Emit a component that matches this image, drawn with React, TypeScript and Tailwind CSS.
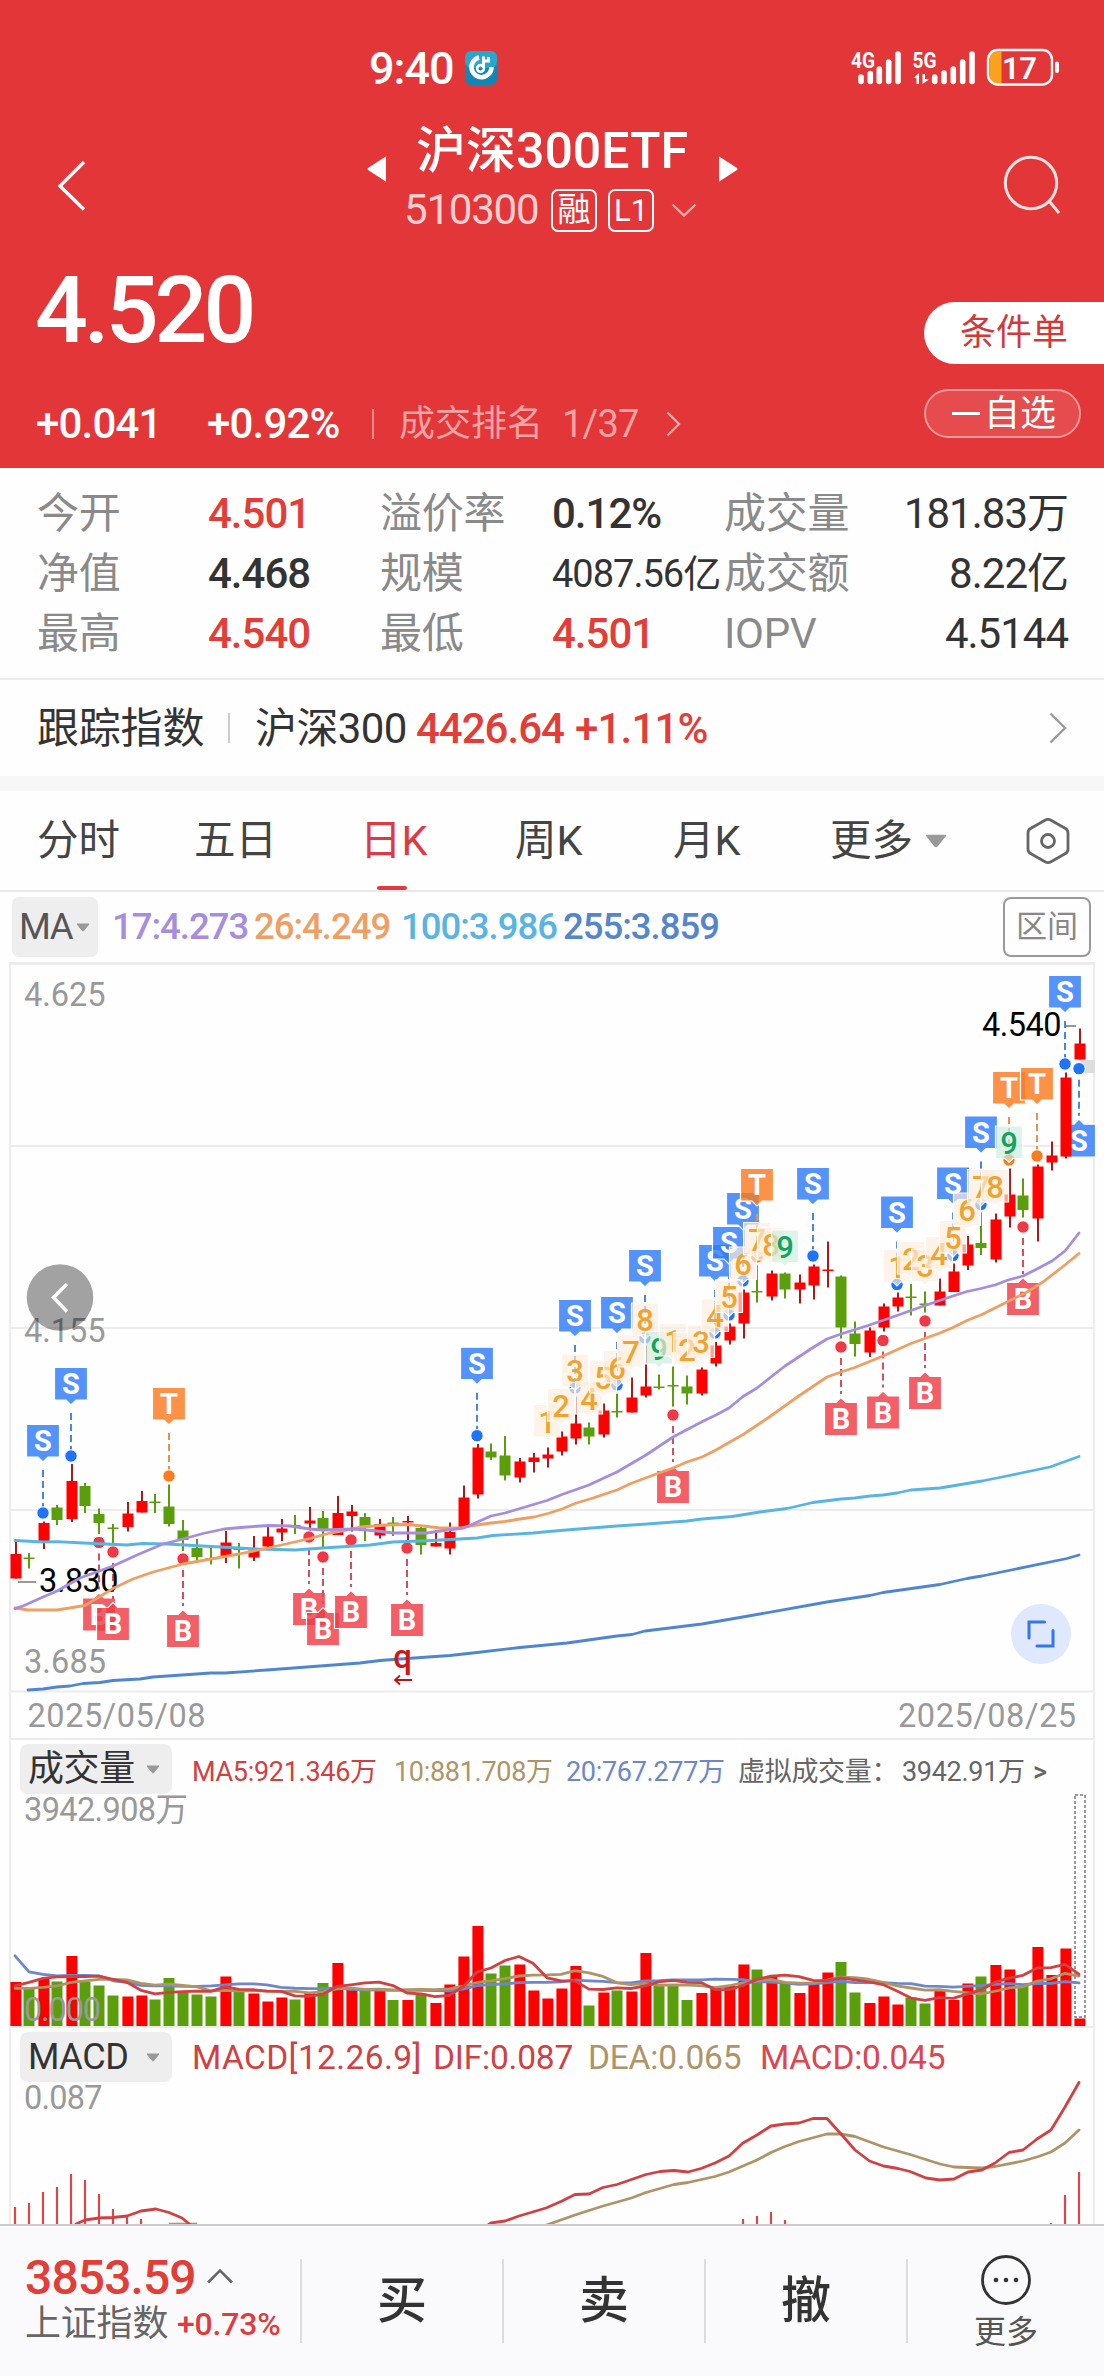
import type { ReactNode } from "react";
import clsx from "clsx";

const STEP = 14;
const FIRST_X = 15;
const slotX = (i: number) => FIRST_X + i * STEP;

/* ---------- dados ---------- */

// r = alta, g = queda; y em px: [máxima, topo do corpo, base do corpo, mínima]
type Candle = ["r" | "g", number, number, number, number];

const candles: Candle[] = [
  ["r", 1542, 1554, 1578.5, 1578.5], ["g", 1553, 1557.5, 1558.5, 1568.5], ["r", 1521.5, 1523, 1541, 1549],
  ["g", 1505, 1507.5, 1520, 1525], ["r", 1464, 1481, 1519, 1522], ["g", 1483, 1486, 1506, 1513],
  ["g", 1508.5, 1514, 1523, 1534], ["g", 1524, 1527.5, 1528.5, 1543], ["r", 1502, 1513.5, 1527, 1531.5],
  ["r", 1491, 1501, 1512.5, 1512.5], ["g", 1494, 1501.5, 1502.5, 1513], ["g", 1484.5, 1506.5, 1524, 1526.5],
  ["g", 1520, 1530.5, 1540, 1551], ["g", 1539, 1548, 1557, 1563], ["g", 1548, 1558, 1559, 1564.5],
  ["r", 1531, 1542.5, 1556.5, 1563], ["g", 1543, 1548.5, 1549.5, 1568.5], ["r", 1536, 1550.5, 1557.5, 1561],
  ["r", 1526.5, 1536.5, 1546.5, 1549], ["r", 1519, 1528.5, 1532.5, 1541], ["g", 1515, 1525, 1526, 1534],
  ["r", 1507, 1520.5, 1523.5, 1534], ["g", 1511, 1518, 1530, 1547], ["r", 1496, 1513, 1535, 1535],
  ["r", 1505, 1511.5, 1516, 1531.5], ["g", 1513, 1517, 1527.5, 1541], ["r", 1519, 1524, 1535.5, 1538.5],
  ["g", 1517, 1522.5, 1523.5, 1536], ["r", 1516, 1521, 1522, 1541.5], ["g", 1526.5, 1528, 1545, 1554.5],
  ["r", 1530, 1543, 1546.5, 1546.5], ["r", 1522.5, 1532, 1548.5, 1554.5], ["r", 1485.5, 1497.5, 1527.5, 1527.5],
  ["r", 1444, 1447.5, 1494.5, 1498.5], ["g", 1443.5, 1451.5, 1457.5, 1460], ["g", 1436, 1455.5, 1475.5, 1480.5],
  ["r", 1458, 1461.5, 1477.5, 1482.5], ["r", 1453, 1457.5, 1462, 1472.5], ["r", 1447.5, 1454.5, 1458.5, 1467.5],
  ["r", 1431.5, 1436.5, 1451.5, 1455.5], ["r", 1396.5, 1423.5, 1438.5, 1444.5], ["g", 1422.5, 1427.5, 1436.5, 1444.5],
  ["r", 1403.5, 1410.5, 1434.5, 1437.5], ["g", 1393.5, 1411, 1412, 1417.5], ["r", 1377.5, 1397.5, 1412.5, 1412.5],
  ["r", 1345.5, 1386.5, 1395.5, 1397.5], ["g", 1374.5, 1386.5, 1387.5, 1389.5], ["g", 1366.5, 1385, 1386, 1406.5],
  ["g", 1375.5, 1386.5, 1393.5, 1404.5], ["r", 1367.5, 1369.5, 1393.5, 1395.5], ["r", 1342, 1345.5, 1363.5, 1366.5],
  ["r", 1323.5, 1326.5, 1340.5, 1344.5], ["r", 1289.5, 1292.5, 1323.5, 1338.5], ["g", 1265.5, 1291, 1292, 1302.5],
  ["r", 1270.5, 1273.5, 1296.5, 1300.5], ["g", 1272.5, 1273.5, 1289.5, 1298.5], ["r", 1274.5, 1282.5, 1289.5, 1303.5],
  ["r", 1264.5, 1266.5, 1285.5, 1299.5], ["r", 1241.5, 1269.5, 1270.5, 1287.5], ["g", 1275.5, 1276.5, 1327.5, 1338.5],
  ["g", 1321.5, 1333.5, 1344, 1356.5], ["r", 1327.5, 1330.5, 1352.5, 1357], ["r", 1303.5, 1306.5, 1327.5, 1331.5],
  ["r", 1292.5, 1297.5, 1306.5, 1311.5], ["g", 1284, 1296.5, 1297.5, 1315.5], ["g", 1291.5, 1303.5, 1304.5, 1312.5],
  ["r", 1278.5, 1291.5, 1305.5, 1305.5], ["r", 1263.5, 1271.5, 1292, 1292], ["r", 1236, 1244.5, 1265.5, 1270],
  ["g", 1212.5, 1243, 1248, 1255], ["r", 1213.5, 1219.5, 1259.5, 1262.5], ["r", 1168.5, 1194.5, 1216.5, 1227.5],
  ["g", 1178.5, 1195.5, 1210, 1217.5], ["r", 1164.5, 1166.5, 1218.5, 1241.5], ["r", 1141.5, 1155.5, 1162.5, 1170.5],
  ["r", 1072.5, 1077.5, 1156.5, 1158.5], ["r", 1028.5, 1043.5, 1059.5, 1059.5],
];

const MA17 =
  "15,1608.7 23,1606 43,1597 57,1591 80,1578 113,1566 137,1555 163,1544 183,1539 203,1533.5 224,1529 247,1527 268,1525.5 290,1526 310,1529 323,1530 338,1529.5 353,1529 367,1530 377,1531 393,1533 427,1533 440,1531 464,1528 491,1516 505,1513 547,1500.5 562,1494.5 589,1485 605,1477.5 617,1472 646,1455 673,1437 702,1421.7 716,1415 729,1408 743,1396.5 757,1388 785,1366 813,1347.5 827,1339 841,1334 868,1325.5 897,1315.5 925,1305.5 953,1296 967,1291.5 981,1288.5 995,1285 1008,1280 1023,1276 1037,1269 1052,1261 1065,1251 1079,1233";
const MA26 =
  "15,1608 28,1610 57,1610 85,1605.5 100,1596.5 113,1588.5 133,1579 153,1572 183,1564 211,1559 239,1554 268,1548 297,1541.5 310,1538.5 330,1533 347,1530 360,1527 387,1525 407,1524.5 423,1526 440,1528 460,1528 470,1526 491,1523 505,1521.5 520,1519 534,1517 548,1513.5 562,1509 575,1503.5 593,1498 617,1490 632,1483 659,1473 673,1468 687,1462 702,1457 716,1450 730,1442 744,1434 770,1416.5 798,1396.5 827,1377 841,1372 855,1367.5 883,1356 911,1343.5 940,1333 953,1327.5 967,1320.5 982,1314.5 1007,1302 1027,1292 1043,1282 1063,1266.5 1079,1253.5";
const MA100 =
  "15,1540.5 43,1542 57,1541.7 83,1543 127,1545 143,1543.5 167,1544 211,1546.5 239,1548 258,1549 295,1550 323,1548 347,1546.5 370,1545 393,1542 433,1540.5 477,1538 493,1535.5 533,1533 560,1530.5 617,1526 647,1524 687,1521 702,1519 732,1516.5 760,1512 787,1508.5 813,1502.5 841,1499 855,1498 870,1496 883,1495 897,1493 911,1490 940,1488 982,1481 1007,1476 1050,1467 1079,1456.5";
const MA255 =
  "28,1690 43,1689 57,1687 70,1686 83,1683.5 100,1682.5 113,1680.5 140,1679 153,1677 211,1673 225,1673 267,1670 300,1667.5 360,1663 380,1660.5 393,1659.5 450,1655.5 477,1652.5 520,1647.5 567,1643 617,1636 632,1634.5 645,1631 702,1624 740,1617.5 827,1602 870,1595.5 883,1592.5 940,1584.5 967,1578.5 982,1576 1067,1558.5 1079,1555";

type FlagKind = "S" | "T" | "B";
// [tipo, posição, y do ponto]
const flags: [FlagKind, number, number][] = [
  ["S", 2, 1513], ["S", 4, 1456], ["B", 6, 1542.5], ["B", 7, 1552], ["T", 11, 1476], ["B", 12, 1559],
  ["B", 21, 1537], ["B", 22, 1557], ["B", 24, 1540], ["B", 28, 1548], ["S", 33, 1435.7], ["S", 40, 1388],
  ["S", 43, 1385], ["S", 45, 1338], ["B", 47, 1415], ["S", 50, 1333], ["S", 51, 1315], ["S", 52, 1281],
  ["T", 53, 1257], ["S", 57, 1256], ["B", 59, 1347], ["B", 62, 1340.5], ["S", 63, 1284.5], ["B", 65, 1321],
  ["S", 67, 1255.5], ["S", 69, 1204.5], ["T", 71, 1160], ["B", 72, 1227], ["T", 73, 1156], ["S", 75, 1064],
];

// contagem sequencial: [posição, número, y do topo]
const counts: [number, number, number][] = [
  [38, 1, 1404.5], [39, 2, 1388.5], [40, 3, 1354], [41, 4, 1381.5], [42, 5, 1360.5], [43, 6, 1350.5],
  [44, 7, 1334.5], [45, 8, 1303], [46, 9, 1331.5], [47, 1, 1323.5], [48, 2, 1332.5], [49, 3, 1325],
  [50, 4, 1299], [51, 5, 1280], [52, 6, 1247], [53, 7, 1222.5], [54, 8, 1227.5], [55, 9, 1230],
  [63, 1, 1249.5], [64, 2, 1241.5], [65, 3, 1249], [66, 4, 1236.5], [67, 5, 1220.5], [68, 6, 1193],
  [69, 7, 1169.5], [70, 8, 1169.5], [71, 9, 1126],
];

// altura em px de cada barra de volume
const volumes = [
  44, 38.5, 47, 44.5, 70, 44, 40.5, 30.5, 29.5, 30.5, 26.5, 48, 34, 31.5, 29.5, 49.5, 35, 32.5, 24.5, 28.5, 26.5, 33,
  43, 63, 37, 36.5, 36, 26, 26, 32.5, 23, 41.5, 69.5, 100, 52.5, 60.5, 61.5, 35.5, 27.5, 37.5, 60, 20.5, 33.5, 35.5,
  34.5, 73, 41, 40.5, 26, 33, 38.5, 40, 61.5, 56.5, 49, 43.5, 33, 43, 53.5, 64, 33.5, 23, 29.5, 21.5, 28.5, 22.5,
  36.5, 26, 42.5, 49.5, 61, 56.5, 40.5, 79, 51, 77.5, 7.5,
];

const DIF_LEFT = "76,2224 85,2220 99,2218 113,2217.5 127,2216 141,2211 156,2209 169,2212.5 182,2218 193,2227";
const DIF =
  "485,2227 491,2223 505,2221 519,2216 546,2208 561,2201.5 575,2194.5 589,2194 603,2187.5 617,2184.5 646,2174.5 660,2171.5 674,2170.5 688,2172 701,2168.5 715,2163 729,2156 743,2143 757,2135 771,2126 785,2124 799,2123 813,2118.5 827,2118.5 841,2134 855,2150 869.5,2161 883.5,2166 898,2168.5 910,2171.5 926,2178 940,2180 954,2179 968,2172 982,2170 995,2163 1009,2152.5 1023,2150 1037,2139 1051,2130 1065,2107 1079,2082.5";
const DEA =
  "541,2227 575,2215 603,2206 631.5,2198 646,2192.5 674,2184.5 688,2182.5 715,2176.5 729,2172 757,2160 771,2152.5 785,2146.5 799,2141.5 827,2134 841,2134 855,2136.5 883.5,2147 910,2154.5 940,2164 954,2167 982,2168 995,2166.5 1023,2161 1038.5,2156.5 1051,2152 1065,2143 1079,2130";
const macdBars: [number, number][] = [
  [0, 2207], [1, 2203], [2, 2192], [3, 2187], [4, 2174], [5, 2180], [6, 2194], [7, 2209], [8, 2217], [9, 2219],
  [52, 2219], [53, 2216], [54, 2212], [55, 2220], [74, 2223], [75, 2195], [76, 2172],
];

const UP = "#ff0000";
const DOWN = "#5a9e0c";
const GRID = "#ececec";

/* ---------- médias de volume ---------- */

function averageLine(period: number, lead: number[]) {
  return volumes
    .map((_, i) => {
      const h =
        i < lead.length
          ? lead[i]
          : volumes.slice(i - period + 1, i + 1).reduce((a, b) => a + b, 0) / period;
      return `${slotX(i)},${2025.3 - h}`;
    })
    .join(" ");
}

const VOL_MA5 = averageLine(5, [39.5, 43, 47, 48.5]);
const VOL_MA10 = averageLine(10, [37, 37, 38, 39.5, 43, 44.5, 46, 46, 45.5]);
const VOL_MA20 = averageLine(
  20,
  [69.5, 53.5, 51, 49.5, 50, 50, 49.5, 44.5, 43, 40, 39.5, 39.5, 39, 39, 39.5, 40.5, 41.5, 41.5, 40.5],
);

/* ---------- peças do gráfico ---------- */

function SvgText({
  x,
  y,
  size,
  length,
  fill = "#999",
  children,
}: {
  x: number;
  y: number;
  size: number;
  length: number;
  fill?: string;
  children: string;
}) {
  return (
    <text x={x} y={y} fontSize={size} textLength={length} fill={fill}>
      {children}
    </text>
  );
}

function Line({ points, color, width = 2.8 }: { points: string; color: string; width?: number }) {
  return (
    <polyline
      points={points}
      fill="none"
      stroke={color}
      strokeWidth={width}
      strokeLinejoin="round"
      strokeLinecap="round"
    />
  );
}

const flagColors = {
  S: { box: "#2f7bfb", dot: "#1f74f5", dash: "#4a86dd" },
  T: { box: "#fb7a1e", dot: "#f97d20", dash: "#e8904c" },
  B: { box: "#f03b46", dot: "#ee3a47", dash: "#d2505e" },
};

function Flag({ kind, x, dot, below }: { kind: FlagKind; x: number; dot: number; below: boolean }) {
  const c = flagColors[kind];
  const top = below ? dot + 55.5 : dot - 88.5;
  const shape = below
    ? `M${x - 16.5} ${top}h11.5l5-5l5 5h11.5v33h-33z`
    : `M${x - 16.5} ${top}h33v32.5h-11.5l-5 5l-5-5h-11.5z`;
  return (
    <g>
      <line
        x1={x}
        x2={x}
        y1={below ? dot + 11 : dot - 43}
        y2={below ? dot + 47 : dot - 6}
        stroke={c.dash}
        strokeWidth={2}
        strokeDasharray="7 4"
      />
      <circle cx={x} cy={dot} r={6.2} fill={c.dot} stroke="#fff" strokeWidth={1} />
      <path d={shape} fill={c.box} fillOpacity={0.82} stroke="#fff" strokeWidth={1.2} />
      <text x={x} y={top + 26.5} fontSize={29} fontWeight={700} fill="#fff" textAnchor="middle">
        {kind}
      </text>
    </g>
  );
}

function CountTag({ x, n, top }: { x: number; n: number; top: number }) {
  const nine = n === 9;
  return (
    <g>
      <path
        d={`M${x - 13.5} ${top}h27v32.5h-9.5l-4 4l-4-4h-9.5z`}
        fill={nine ? "#cdeedd" : "#fdeedd"}
        fillOpacity={0.68}
        stroke="#fff"
        strokeWidth={1.2}
      />
      <text
        x={x}
        y={top + 28}
        fontSize={31}
        fontWeight={500}
        fill={nine ? "#13a35f" : "#f0a32f"}
        textAnchor="middle"
      >
        {n}
      </text>
    </g>
  );
}

function PriceChart() {
  return (
    <svg viewBox="0 962 1104 782" className="block h-[782px] w-full">
      <defs>
        <clipPath id="plot">
          <rect x="9" y="962" width="1086" height="777" />
        </clipPath>
      </defs>
      <g stroke={GRID} strokeWidth={2} fill="none">
        <path d="M9 963.5H1095" strokeWidth={3} />
        <path d="M9 1146H1095M9 1328H1095M9 1510H1095M9 1691.5H1095M9 1739H1095M10 962V1744M1094 962V1744" />
      </g>
      <rect x="1080" y="1060" width="15" height="13" fill="#ddd" />

      {/* a venda do dia fica atrás do candle anterior */}
      <g clipPath="url(#plot)">
        <Flag kind="S" x={slotX(76)} dot={1068.7} below />
      </g>

      {candles.map(([dir, high, top, bottom, low], i) => {
        const up = dir === "r";
        const cx = slotX(i) + (up ? 1 : 0);
        return (
          <g key={i}>
            <line x1={cx} x2={cx} y1={high} y2={low} stroke={up ? "#a61c1c" : DOWN} strokeWidth={2} />
            <rect x={cx - 5.5} y={top} width={11} height={Math.max(bottom - top, 1.5)} fill={up ? UP : DOWN} />
          </g>
        );
      })}

      {flags.map(([kind, i, dot]) => (
        <Flag key={`${kind}${i}`} kind={kind} x={slotX(i)} dot={dot} below={kind === "B"} />
      ))}
      {counts.map(([i, n, top]) => (
        <CountTag key={i} x={slotX(i)} n={n} top={top} />
      ))}

      <SvgText x={24} y={1006} size={32.5} length={81.5}>4.625</SvgText>
      <SvgText x={24} y={1341.5} size={32.5} length={81.5}>4.155</SvgText>
      <SvgText x={24} y={1672.5} size={32.5} length={82}>3.685</SvgText>
      <SvgText x={39} y={1591.5} size={32.5} length={79.5} fill="#000">3.830</SvgText>
      <SvgText x={982} y={1035.5} size={32.5} length={79.5} fill="#000">4.540</SvgText>
      <path d="M18 1582H36M1065 1026H1076" stroke="#777" strokeWidth={1.6} />

      <Line points={MA255} color="#4f86cf" />
      <Line points={MA100} color="#58b4e2" />
      <Line points={MA26} color="#eea064" />
      <Line points={MA17} color="#a58ddf" />

      {/* ex-direitos */}
      <text x={402.5} y={1668} fontSize={33} fontWeight={500} fill="#cc1717" textAnchor="middle">q</text>
      <path d="M412 1680H395M400 1675.5L395 1680L400 1684.5" fill="none" stroke="#b51616" strokeWidth={1.8} />

      <circle cx="60" cy="1297.5" r="33.3" fill="#000" fillOpacity="0.36" />
      <path d="M67 1284L53.5 1297.5L67 1311.5" fill="none" stroke="#fff" strokeWidth={3.6} />
      <circle cx="1041" cy="1634" r="30" fill="#dfe8fd" />
      <path
        d="M1044.5 1622H1029V1638M1037 1646H1053V1630.5"
        fill="none"
        stroke="#3478e8"
        strokeWidth={3}
        strokeLinecap="round"
      />

      <SvgText x={27.5} y={1727} size={32.5} length={178}>2025/05/08</SvgText>
      <SvgText x={898} y={1727} size={32.5} length={178}>2025/08/25</SvgText>
    </svg>
  );
}

function VolumeChart() {
  return (
    <svg viewBox="0 1794 1104 238" className="block h-[238px] w-full overflow-visible">
      <path d="M10 1794V2032M1094 1794V2032M9 2027H1095" stroke={GRID} strokeWidth={2} />
      <SvgText x={24} y={1821} size={32.5} length={164}>3942.908万</SvgText>
      {volumes.map((h, i) => (
        <rect
          key={i}
          x={slotX(i) - (candles[i][0] === "r" ? 4.6 : 5.5)}
          y={2026 - h}
          width={11}
          height={h}
          fill={candles[i][0] === "r" ? UP : DOWN}
        />
      ))}
      <rect
        x="1075"
        y="1795"
        width="10"
        height="222"
        fill="none"
        stroke="#777"
        strokeWidth={1.5}
        strokeDasharray="3 2"
      />
      <Line points={VOL_MA20} color="#6d86cc" />
      <Line points={VOL_MA10} color="#ae9466" />
      <Line points={VOL_MA5} color="#cf4142" />
      <SvgText x={24} y={2020.5} size={32.5} length={77}>0.000</SvgText>
    </svg>
  );
}

function MacdChart() {
  return (
    <svg viewBox="0 2080 1104 144" className="-mt-1 block h-36 w-full">
      <path d="M10 2080V2224M1094 2080V2224" stroke={GRID} strokeWidth={2} />
      <SvgText x={24} y={2109} size={32.5} length={78.5}>0.087</SvgText>
      {macdBars.map(([i, y]) => (
        <line key={i} x1={slotX(i)} x2={slotX(i)} y1={y} y2={2226} stroke="#d9474a" strokeWidth={2.2} />
      ))}
      <path d="M169 2223.7H197" stroke="#ae9466" strokeWidth={2} />
      <Line points={DEA} color="#ae9466" />
      <Line points={DIF_LEFT} color="#cf4142" />
      <Line points={DIF} color="#cf4142" />
    </svg>
  );
}

/* ---------- blocos da página ---------- */

function Caret({ className }: { className?: string }) {
  return (
    <svg viewBox="0 0 14 9" className={clsx("shrink-0", className)}>
      <path d="M1 1H13L7.8 7.6Q7 8.4 6.2 7.6Z" fill="#999" stroke="#999" strokeLinejoin="round" />
    </svg>
  );
}

function Txt({ className, children }: { className: string; children: ReactNode }) {
  return <span className={clsx("block shrink-0 whitespace-nowrap", className)}>{children}</span>;
}

function StatusBar() {
  return (
    <div className="flex h-[100px] items-start pt-10">
      <Txt className="mt-[5px] ml-[369px] w-[96px] text-[45px] leading-[48px] font-medium tracking-[-1px]">9:40</Txt>
      <svg viewBox="0 0 32 34" className="mt-[11px] h-[34px] w-8">
        <rect width="32" height="34" rx="6" fill="#1286b4" />
        <rect width="32" height="17" rx="6" fill="#2aa6cc" />
        <path d="M14 6.5A10 10 0 1 0 26.5 16" fill="none" stroke="#fff" strokeWidth="4.6" />
        <circle cx="15.5" cy="17.5" r="3.4" fill="none" stroke="#fff" strokeWidth="2.6" />
        <path d="M18.5 15.5V5.5M18.5 10H23.5V6" fill="none" stroke="#fff" strokeWidth="3" />
      </svg>
      <svg viewBox="850 40 214 60" className="ml-[353px] h-[60px] w-[214px]">
        <g stroke="#fff" strokeWidth="5.6" strokeLinecap="round">
          <path d="M861 77V81.5M870.3 73.5V81.5M879.3 69V81.5M888.7 62V81.5M898 54V81.5" />
          <path d="M934.7 77V81.5M944 73V81.5M953.3 69V81.5M962.7 62V81.5M972 54V81.5" />
        </g>
        <g fill="#fff" fontWeight={700} fontSize={22}>
          <text x="851" y="67.5" textLength="24" lengthAdjust="spacingAndGlyphs">4G</text>
          <text x="912.5" y="67.5" textLength="24" lengthAdjust="spacingAndGlyphs">5G</text>
        </g>
        <path d="M914 77.5L919 73V84H916.5V78.5ZM922.5 74H925V79L929 79.5L922.5 84Z" fill="#fff" />
        <path d="M1001.5 51.5H996Q989.5 52 989.5 59V75Q989.5 82.5 996 83H1001.5Z" fill="#fca11d" />
        <rect x="988" y="50" width="64" height="34.5" rx="9.5" fill="none" stroke="#fff" strokeWidth="2.4" />
        <path d="M1057 63.5V71" stroke="#fff" strokeWidth="4" strokeLinecap="round" />
        <text x="1002" y="78.5" fontSize={31} fontWeight={600} fill="#fff" textLength="35">17</text>
      </svg>
    </div>
  );
}

function Header() {
  return (
    <header className="h-[468px] bg-[#e33638] text-white">
      <StatusBar />
      <div className="flex h-[154px]">
        <svg viewBox="0 0 30 52" className="mt-[60px] ml-[57px] h-[52px] w-[30px]">
          <path d="M27 2L3 26L27 49.5" fill="none" stroke="#fff" strokeWidth="3.4" />
        </svg>
        <svg viewBox="0 0 20 28" className="mt-[55px] ml-[280px] h-7 w-5">
          <path d="M19 2V26Q19 27 18 26L1 15Q0 14 1 13L18 2Q19 1 19 2Z" fill="#fff" />
        </svg>
        <div className="w-[330px] pt-[23px]">
          <Txt className="text-center text-[50px] leading-[56px] font-medium">沪深300ETF</Txt>
          <div className="mt-[9px] flex items-center">
            <Txt className="ml-[17px] w-[147px] text-[42px] leading-[44px] tracking-[-1.2px] text-[#fbcfcf]">510300</Txt>
            <Txt className="h-[43px] w-[46px] rounded-[7px] border-2 text-center text-[33px] leading-[38px]">融</Txt>
            <Txt className="ml-[11px] h-[43px] w-[46px] rounded-[7px] border-2 text-center text-[31px] leading-[40px]">
              L1
            </Txt>
            <svg viewBox="0 0 26 14" className="ml-[17px] h-3.5 w-[26px]">
              <path d="M1.5 1.5L13 12.5L24.5 1.5" fill="none" stroke="#f5a9a9" strokeWidth="2.4" />
            </svg>
          </div>
        </div>
        <svg viewBox="0 0 20 28" className="mt-[55px] ml-px h-7 w-5">
          <path d="M1 2V26Q1 27 2 26L19 15Q20 14 19 13L2 2Q1 1 1 2Z" fill="#fff" />
        </svg>
        <svg viewBox="0 0 62 62" className="mt-[54px] ml-[263px] size-[62px]">
          <circle cx="30" cy="29" r="25.7" fill="none" stroke="#fde2e2" strokeWidth="3" />
          <path d="M48.5 47.5L58 59" stroke="#fde2e2" strokeWidth="3" />
        </svg>
      </div>
      <div className="flex h-[214px] justify-between">
        <div>
          <Txt className="mt-[13px] ml-[35px] text-[93px] leading-[88px] font-medium tracking-[-4px]">4.520</Txt>
          <div className="mt-12 flex h-[42px] items-center text-[42px] leading-[42px]">
            <Txt className="ml-9 w-[171px] font-medium tracking-[-0.8px]">+0.041</Txt>
            <Txt className="w-[165px] font-medium tracking-[-0.8px]">+0.92%</Txt>
            <div className="h-[30px] w-0.5 bg-[#f08a8b]" />
            <Txt className="ml-[25px] w-[163px] text-[36px] text-[#f5a3a4]">成交排名</Txt>
            <Txt className="w-[104px] text-[38px] tracking-[-0.8px] text-[#f5a3a4]">1/37</Txt>
            <svg viewBox="0 0 15 26" className="h-[26px] w-[15px]">
              <path d="M1.5 1.5L13 13L1.5 24.5" fill="none" stroke="#f5a9a9" strokeWidth="2.4" />
            </svg>
          </div>
        </div>
        <div className="w-[180px] pt-12">
          <Txt className="h-[62px] rounded-l-[31px] bg-white pl-[36px] text-[36px] leading-[62px] text-[#d03a38]">
            条件单
          </Txt>
          <div className="mt-[25px] flex h-[49px] w-[157px] items-center rounded-full border-2 border-[#f19a9b] bg-[#e64b4d]">
            <div className="ml-[26px] h-[3px] w-[28px] bg-white" />
            <Txt className="ml-1 text-[36px] leading-[46px]">自选</Txt>
          </div>
        </div>
      </div>
    </header>
  );
}

const quotes = [
  ["今开", "4.501", true, "溢价率", "0.12%", false, "成交量", "181.83万"],
  ["净值", "4.468", false, "规模", "4087.56亿", false, "成交额", "8.22亿"],
  ["最高", "4.540", true, "最低", "4.501", true, "IOPV", "4.5144"],
] as const;

function Quotes() {
  return (
    <section className="h-[212px] border-b-2 border-[#ececec] pt-4 text-[42px] leading-[60px] font-medium tracking-[-1px] text-[#333]">
      {quotes.map(([l1, v1, up1, l2, v2, up2, l3, v3]) => (
        <div key={l1} className="flex h-[60px] pr-9 pl-[37px]">
          <Txt className="w-[171px] font-normal tracking-[-0.3px] text-[#8a8a8a]">{l1}</Txt>
          <Txt className={clsx("w-[172px]", up1 && "text-[#e33d38]")}>{v1}</Txt>
          <Txt className="w-[172px] font-normal tracking-[-0.3px] text-[#8a8a8a]">{l2}</Txt>
          <Txt className={clsx("w-[172px]", up2 && "text-[#e33d38]", v2.length > 7 && "text-[38px] font-normal")}>
            {v2}
          </Txt>
          <Txt className="font-normal tracking-[-0.3px] text-[#8a8a8a]">{l3}</Txt>
          <Txt className="ml-auto font-normal">{v3}</Txt>
        </div>
      ))}
    </section>
  );
}

function TrackedIndex() {
  return (
    <section className="flex h-24 items-center pl-[37px] text-[42px] leading-[60px] font-medium tracking-[-1px] text-[#333]">
      <Txt className="w-[191px] pt-0.5 font-normal tracking-[-0.2px]">跟踪指数</Txt>
      <div className="h-[30px] w-0.5 bg-[#ccc]" />
      <Txt className="ml-[25px] w-[161px] pt-0.5 font-normal tracking-[-0.6px]">沪深300</Txt>
      <Txt className="w-[159px] pt-0.5 text-[#e33d38]">4426.64</Txt>
      <Txt className="w-[474px] pt-0.5 tracking-[-0.8px] text-[#e33d38]">+1.11%</Txt>
      <svg viewBox="0 0 18 32" className="h-8 w-[18px]">
        <path d="M1.5 1.5L16 16L1.5 30.5" fill="none" stroke="#999" strokeWidth="2.4" />
      </svg>
    </section>
  );
}

const tabs = [
  { label: "分时", width: "w-[157px]" },
  { label: "五日", width: "w-[166px]" },
  { label: "日K", width: "w-[155px]" },
  { label: "周K", width: "w-[158px]" },
  { label: "月K", width: "w-[157px]" },
  { label: "更多", width: "w-[95px]" },
];

function Tabs() {
  const active = "日K";
  return (
    <nav className="flex h-[101px] border-b-2 border-[#e8e8e8] pl-[37px] text-[41.5px] leading-[100px] text-[#444]">
      {tabs.map(({ label, width }) => (
        <div key={label} className={clsx("shrink-0", width, label === active && "text-[#dc3b44]")}>
          <div className="h-[95px]">{label}</div>
          {label === active && <div className="ml-[17px] h-1 w-[30px] rounded-sm bg-[#dc3b44]" />}
        </div>
      ))}
      <Caret className="mt-[43px] h-[14px] w-[22px]" />
      <svg viewBox="0 0 46 48" className="mt-[26px] ml-[78px] h-12 w-[46px]">
        <path
          d="M20 3.2Q23 1.5 26 3.2L40.5 11.5Q43 13 43 16V32Q43 35 40.5 36.5L26 44.8Q23 46.5 20 44.8L5.5 36.5Q3 35 3 32V16Q3 13 5.5 11.5Z"
          fill="none"
          stroke="#666"
          strokeWidth="2.8"
        />
        <circle cx="23" cy="24" r="6.5" fill="none" stroke="#666" strokeWidth="2.8" />
      </svg>
    </nav>
  );
}

function MaRow() {
  return (
    <div className="flex h-[70px] items-start pt-[5px] pl-3 text-[36.5px] leading-[60px] font-medium tracking-[-1px]">
      <div className="flex h-[60px] w-[86px] items-center rounded-[7px] bg-[#eee] pl-[7px] text-[#555]">
        <Txt className="w-[57px] font-normal tracking-[-1.5px]">MA</Txt>
        <Caret className="h-[9px] w-[14px]" />
      </div>
      <Txt className="ml-[14px] w-[142px] text-[#a58ddf]">17:4.273</Txt>
      <Txt className="w-[147px] text-[#eea064]">26:4.249</Txt>
      <Txt className="w-[162px] text-[#58b4e2]">100:3.986</Txt>
      <Txt className="w-[440px] text-[#5585cb]">255:3.859</Txt>
      <Txt className="h-[60px] w-[88px] rounded-lg border-2 border-[#999] text-center text-[31px] leading-[56px] font-normal tracking-normal text-[#888]">
        区间
      </Txt>
    </div>
  );
}

function IndicatorPill({ children }: { children: string }) {
  return (
    <div className="flex h-[50px] w-[152px] shrink-0 items-center rounded-lg bg-[#eee] pl-2 text-[36px] font-normal tracking-[-0.4px] text-[#333]">
      <Txt className="w-[118px]">{children}</Txt>
      <Caret className="h-[9px] w-[14px]" />
    </div>
  );
}

function BottomBar() {
  return (
    <footer className="flex h-[152px] border-t-2 border-[#ccc] bg-[#fafafc]">
      <div className="w-[300px] pt-[26px] pl-[25px]">
        <div className="flex">
          <Txt className="w-[181px] text-[48px] leading-[52px] font-medium tracking-[-0.9px] text-[#e33d38]">
            3853.59
          </Txt>
          <svg viewBox="0 0 28 16" className="mt-4 h-4 w-7">
            <path d="M2 14.5L14 2.5L26 14.5" fill="none" stroke="#666" strokeWidth="2.6" />
          </svg>
        </div>
        <div className="flex leading-10">
          <Txt className="w-[152px] text-[36px] tracking-[-0.2px] text-[#666]">上证指数</Txt>
          <Txt className="text-[32px] font-medium tracking-[-0.2px] text-[#dd3d3d]">+0.73%</Txt>
        </div>
      </div>
      {["买", "卖", "撤"].map((action) => (
        <div key={action} className="flex w-[202px] shrink-0 items-start pt-[33px]">
          <div className="h-[84px] w-0.5 bg-[#dcdcdc]" />
          <div className="w-[200px] text-center text-[50px] leading-[85px] font-medium text-[#333]">{action}</div>
        </div>
      ))}
      <div className="flex w-[198px] items-start pt-[33px]">
        <div className="h-[84px] w-0.5 bg-[#dcdcdc]" />
        <div className="flex w-[196px] flex-col items-center">
          <svg viewBox="0 0 52 52" className="-mt-[6px] h-[52px] w-[52px]">
            <circle cx="26" cy="27" r="23.5" fill="none" stroke="#333" strokeWidth="2.8" />
            <circle cx="16" cy="27" r="2.3" fill="#333" />
            <circle cx="26" cy="27" r="2.3" fill="#333" />
            <circle cx="36" cy="27" r="2.3" fill="#333" />
          </svg>
          <Txt className="mt-[5px] text-[32px] leading-[44px] text-[#555]">更多</Txt>
        </div>
      </div>
    </footer>
  );
}

export default function App() {
  return (
    <main className="h-[2376px] w-[1104px] overflow-hidden bg-[#fefefe] font-['Roboto','Noto_Sans_CJK_SC',sans-serif]">
      <Header />
      <Quotes />
      <TrackedIndex />
      <div className="h-[15px] bg-[#f7f7f7]" />
      <Tabs />
      <MaRow />
      <PriceChart />
      <div className="mx-[9px] flex h-[50px] items-center border-x-2 border-[#ececec] pl-[9px] text-[27px] tracking-[-0.3px]">
        <IndicatorPill>成交量</IndicatorPill>
        <Txt className="ml-5 w-[202px] pt-1.5 text-[#cf4142]">MA5:921.346万</Txt>
        <Txt className="w-[172px] pt-1.5 text-[#ae9466]">10:881.708万</Txt>
        <Txt className="w-[172px] pt-1.5 text-[#6d86cc]">20:767.277万</Txt>
        <Txt className="w-[164px] pt-1.5 text-[#666]">虚拟成交量：</Txt>
        <Txt className="w-[131px] pt-1.5 text-[#666]">3942.91万</Txt>
        <Txt className="pt-1.5 font-medium text-[#666]">&gt;</Txt>
      </div>
      <VolumeChart />
      <div className="mx-[9px] flex h-[52px] items-start border-x-2 border-[#ececec] pl-[9px] text-[33.5px] leading-[52px] tracking-[-0.2px]">
        <IndicatorPill>MACD</IndicatorPill>
        <Txt className="ml-5 w-[241px] tracking-[0.4px] text-[#cf4142]">MACD[12.26.9]</Txt>
        <Txt className="w-[155px] text-[#cf4142]">DIF:0.087</Txt>
        <Txt className="w-[172px] text-[#ae9466]">DEA:0.065</Txt>
        <Txt className="text-[#dd4550]">MACD:0.045</Txt>
      </div>
      <MacdChart />
      <BottomBar />
    </main>
  );
}
